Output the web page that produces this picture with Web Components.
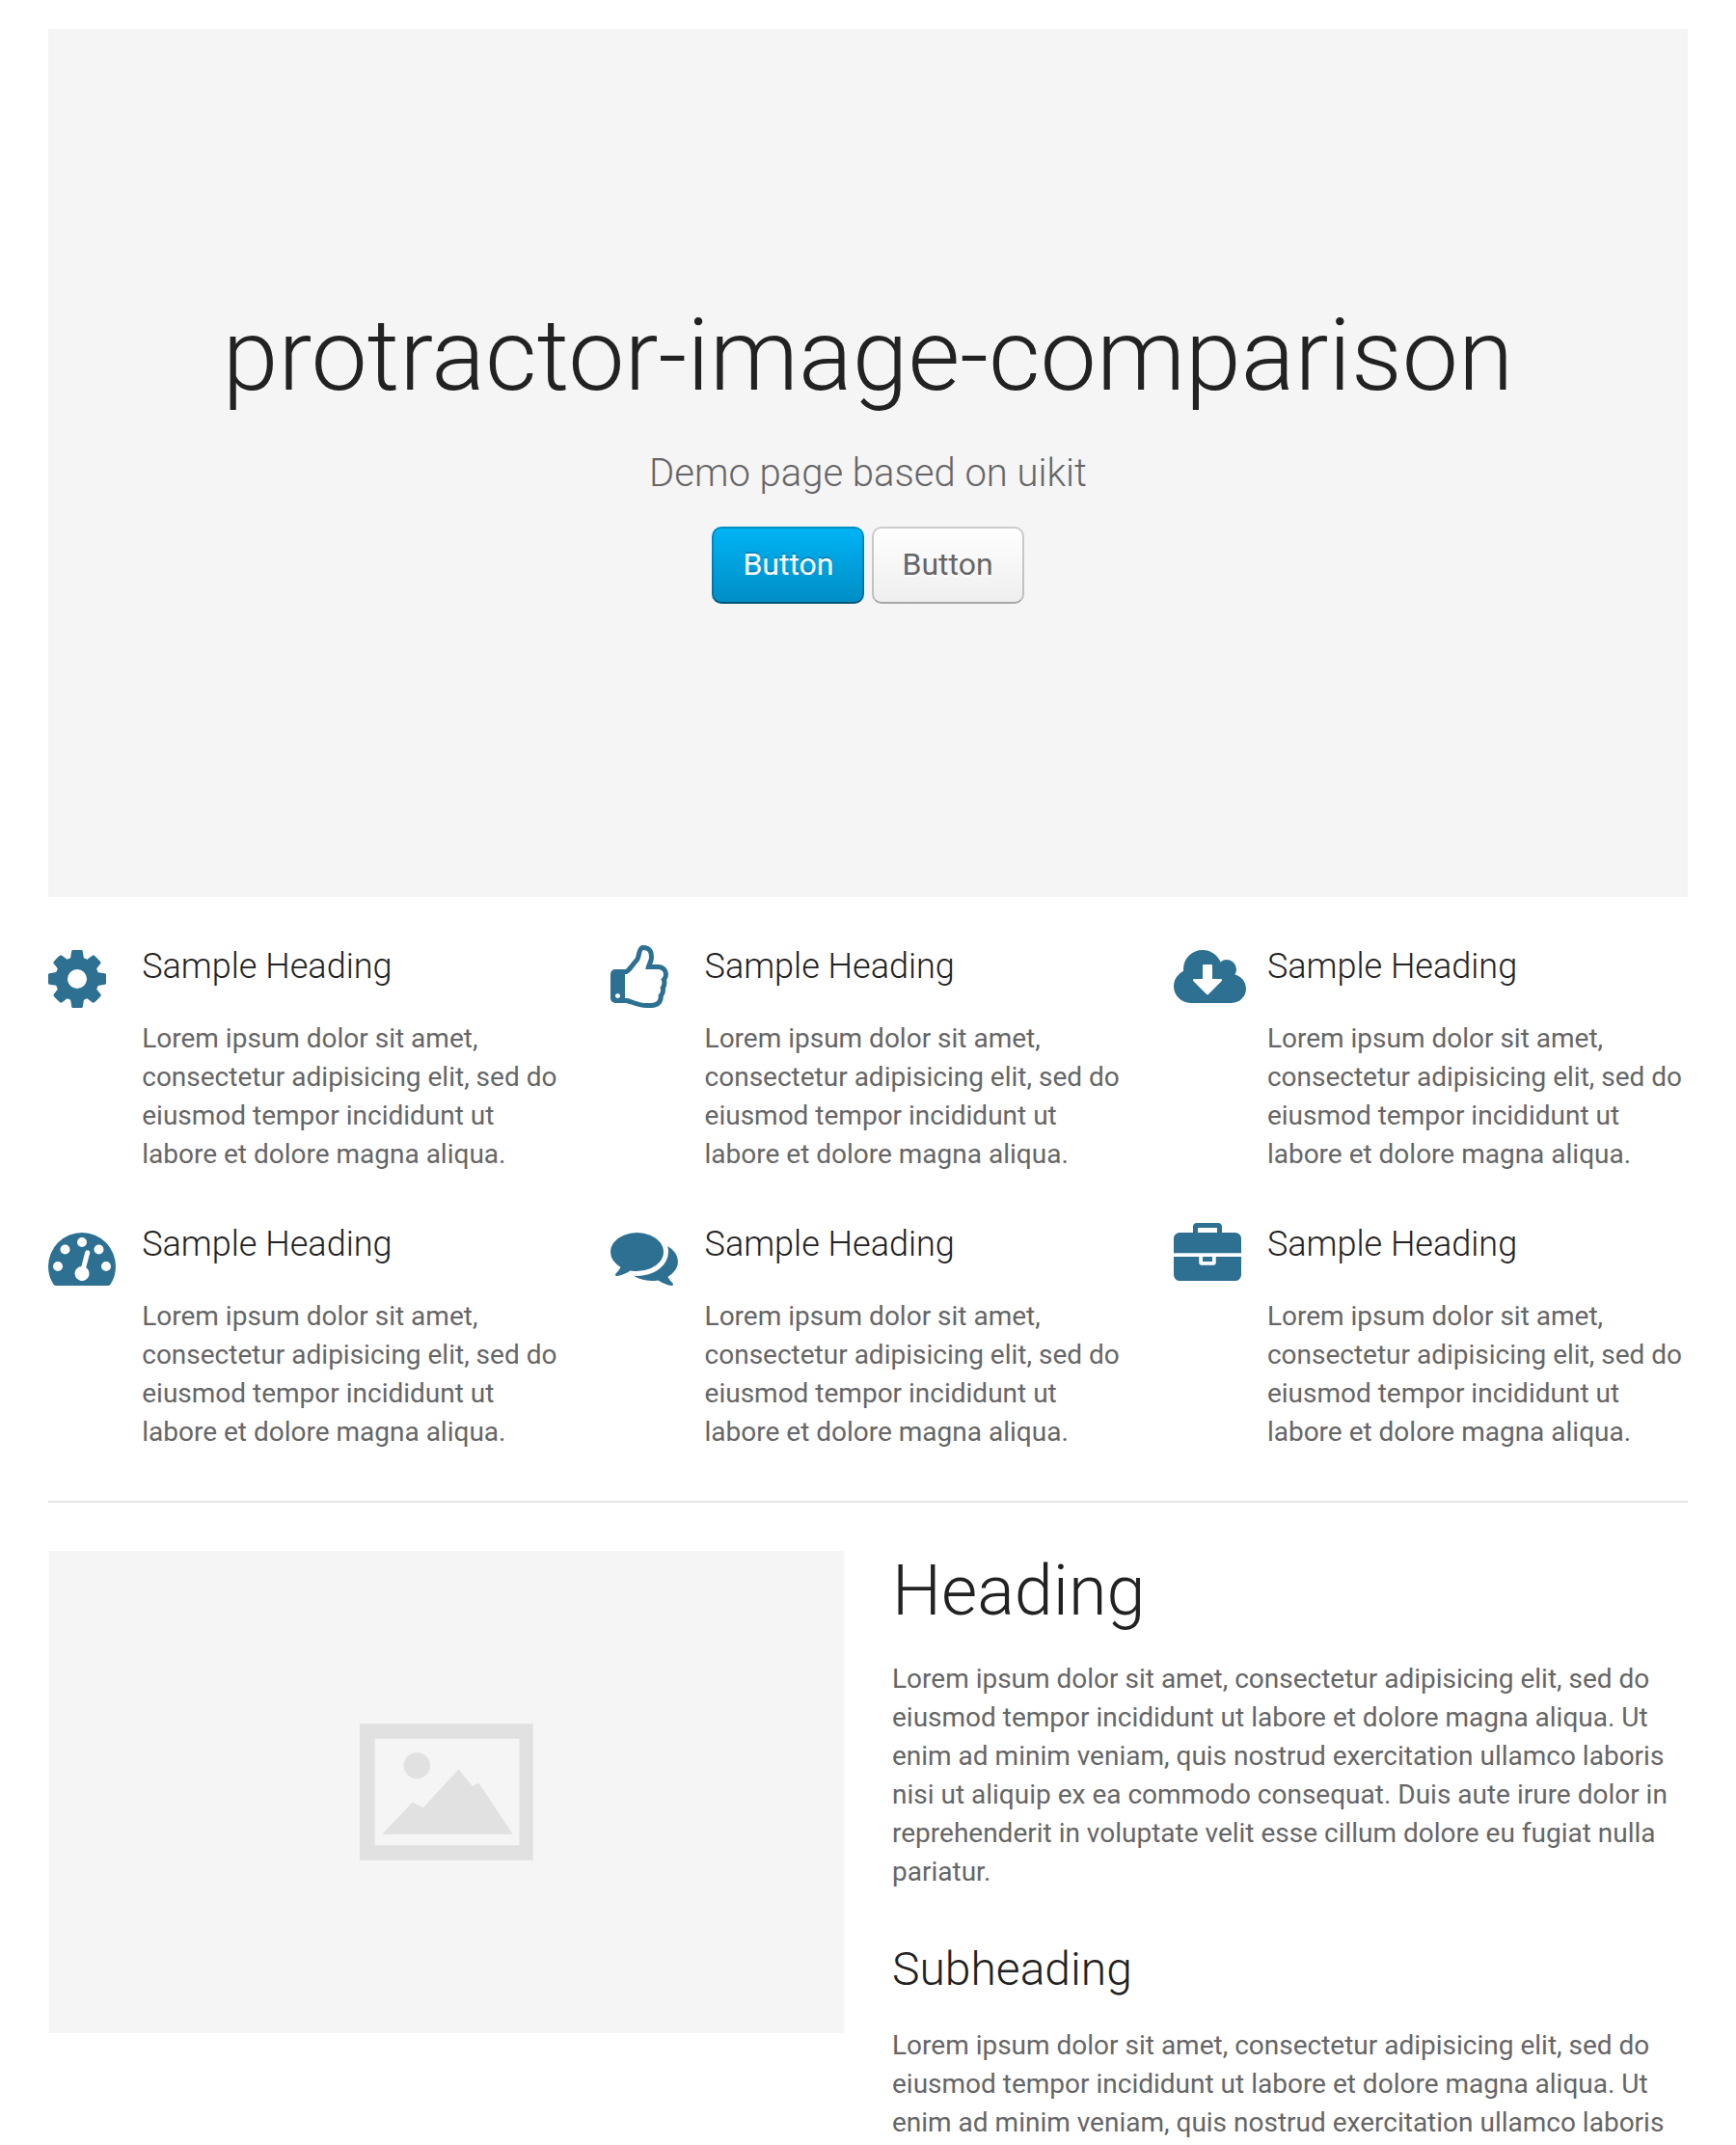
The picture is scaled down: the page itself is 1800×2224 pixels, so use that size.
<!DOCTYPE html>
<html lang="en">
<head>
<meta charset="utf-8">
<title>protractor-image-comparison</title>
<style>
body { margin: 0; background: #fff; color: #666; font: 400 28px/40px Roboto, "Liberation Sans", sans-serif; }
</style>
</head>
<body>
<demo-page></demo-page>
<script>
const define = (name, html) => customElements.define(name, class extends HTMLElement {
  constructor() {
    super();
    this.attachShadow({ mode: 'open' }).innerHTML = html;
  }
});

const ICONS = {
  cog: ['128 0 1536 1792', 'M1152 896q0-106-75-181t-181-75-181 75-75 181 75 181 181 75 181-75 75-181zm512-109v222q0 12-8 23t-20 13l-185 28q-19 54-39 91 35 50 107 138 10 12 10 25t-9 23q-27 37-99 108t-94 71q-12 0-26-9l-138-108q-44 23-91 38-16 136-29 186-7 28-36 28h-222q-14 0-24.5-8.5t-11.5-21.5l-28-184q-49-16-90-37l-141 107q-10 9-25 9-14 0-25-11-126-114-165-168-7-10-7-23 0-12 8-23 15-21 51-66.5t54-70.5q-27-50-41-99l-183-27q-13-2-21-12.5t-8-23.5v-222q0-12 8-23t19-13l186-28q14-46 39-92-40-57-107-138-10-12-10-24 0-10 9-23 26-36 98.5-107.5t94.5-71.5q13 0 26 10l138 107q44-23 91-38 16-136 29-186 7-28 36-28h222q14 0 24.5 8.5t11.5 21.5l28 184q49 16 90 37l142-107q9-9 24-9 13 0 25 10 129 119 165 170 7 8 7 22 0 12-8 23-15 21-51 66.5t-54 70.5q26 50 41 98l183 28q13 2 21 12.5t8 23.5z'],
  thumb: ['128 0 1536 1792', 'M384 1344q0-26-19-45t-45-19-45 19-19 45 19 45 45 19 45-19 19-45zm1152-576q0-51-39-89.5t-89-38.5h-352q0-58 48-159.5t48-160.5q0-98-32-145t-128-47q-26 26-38 85t-30.5 125.5-59.5 109.5q-22 23-77 91-4 5-23 30t-31.5 41-34.5 42.5-40 44-38.5 35.5-40 27-35.5 9h-32v640h32q13 0 31.5 3t33 6.5 38 11 35 11.5 35.5 12.5 29 10.5q211 73 342 73h121q192 0 192-167 0-26-5-56 30-16 47.5-52.5t17.5-73.5-18-69q53-50 53-119 0-25-10-55.5t-25-47.5q32-1 53.5-47t21.5-81zm128-1q0 89-49 163 9 33 9 69 0 77-38 144 3 21 3 43 0 101-60 178 1 139-85 219.5t-227 80.5h-129q-96 0-189.5-22.5t-216.5-65.5q-116-40-138-40h-288q-53 0-90.5-37.5t-37.5-90.5v-640q0-53 37.5-90.5t90.5-37.5h274q36-24 137-155 58-75 107-128 24-25 35.5-85.5t30.5-126.5 62-108q39-37 90-37 84 0 151 32.5t102 101.5 35 186q0 93-48 192h176q104 0 180 76t76 179z'],
  cloud: ['0 0 1920 1792', 'M1280 928q0-14-9-23t-23-9h-224v-352q0-13-9.5-22.5t-22.5-9.5h-192q-13 0-22.5 9.5t-9.5 22.5v352h-224q-13 0-22.5 9.5t-9.5 22.5q0 14 9 23l352 352q9 9 23 9t23-9l351-351q10-12 10-24zm640 224q0 159-112.5 271.5t-271.5 112.5h-1088q-185 0-316.5-131.5t-131.5-316.5q0-130 70-240t188-165q-2-30-2-43 0-212 150-362t362-150q156 0 285.5 87t188.5 231q71-62 166-62 106 0 181 75t75 181q0 76-41 138 130 31 213.5 135.5t83.5 238.5z'],
  gauge: ['0 0 1792 1792', 'M384 1152q0-53-37.5-90.5t-90.5-37.5-90.5 37.5-37.5 90.5 37.5 90.5 90.5 37.5 90.5-37.5 37.5-90.5zm192-448q0-53-37.5-90.5t-90.5-37.5-90.5 37.5-37.5 90.5 37.5 90.5 90.5 37.5 90.5-37.5 37.5-90.5zm428 481l101-382q6-26-7.5-48.5t-38.5-29.5-48 6.5-30 39.5l-101 382q-60 5-107 43.5t-63 98.5q-20 77 20 146t117 89 146-20 89-117q16-60-6-117t-72-91zm660-33q0-53-37.5-90.5t-90.5-37.5-90.5 37.5-37.5 90.5 37.5 90.5 90.5 37.5 90.5-37.5 37.5-90.5zm-640-640q0-53-37.5-90.5t-90.5-37.5-90.5 37.5-37.5 90.5 37.5 90.5 90.5 37.5 90.5-37.5 37.5-90.5zm448 192q0-53-37.5-90.5t-90.5-37.5-90.5 37.5-37.5 90.5 37.5 90.5 90.5 37.5 90.5-37.5 37.5-90.5zm320 448q0 261-141 483-19 29-54 29h-1402q-35 0-54-29-141-221-141-483 0-182 71-348t191-286 286-191 348-71 348 71 286 191 191 286 71 348z'],
  comments: ['0 0 1792 1792', 'M1408 768q0 139-94 257t-256.5 186.5-353.5 68.5q-86 0-176-16-124 88-278 128-36 9-86 16h-3q-11 0-20.5-8t-11.5-21q-1-3-1-6.5t.5-6.5 2-6l2.5-5 3.5-5.5 4-5 4.5-5 4-4.5q5-6 23-25t26-29.5 22.5-29 25-38.5 20.5-44q-124-72-195-177t-71-224q0-139 94-257t256.5-186.5 353.5-68.5 353.5 68.5 256.5 186.5 94 257zm384 256q0 120-71 224.5t-195 176.5q10 24 20.5 44t25 38.5 22.5 29 26 29.5 23 25q1 1 4 4.5t4.5 5 4 5 3.5 5.5l2.5 5 2 6 .5 6.5-1 6.5q-3 14-13 22t-22 7q-50-7-86-16-154-40-278-128-90 16-176 16-271 0-472-132 58 4 88 4 161 0 309-45t264-129q125-92 192-212t67-254q0-77-23-152 129 71 204 178t75 230z'],
  briefcase: ['0 0 1792 1792', 'M640 256h512v-128h-512v128zm1152 640v480q0 66-47 113t-113 47h-1472q-66 0-113-47t-47-113v-480h672v160q0 26 19 45t45 19h320q26 0 45-19t19-45v-160h672zm-768 0v128h-256v-128h256zm768-480v384h-1792v-384q0-66 47-113t113-47h352v-160q0-40 28-68t68-28h576q40 0 68 28t28 68v160h352q66 0 113 47t47 113z']
};

customElements.define('demo-icon', class extends HTMLElement {
  constructor() { super(); this.attachShadow({ mode: 'open' }); }
  connectedCallback() {
    const [box, d] = ICONS[this.getAttribute('name')];
    this.shadowRoot.innerHTML = `<style>:host{display:block;color:#2d7091;height:70px}svg{display:block;height:70px;fill:currentColor}</style>
<svg viewBox="${box}"><path d="${d}"/></svg>`;
  }
});

define('demo-button', `<style>
:host { display: block; }
button { display: block; box-sizing: border-box; width: 158px; height: 80px; margin: 0; padding: 0 0 2px 29.5px; font: inherit; font-size: 32px; line-height: 74px;
  text-align: left; white-space: nowrap; color: #666; text-shadow: 0 2px 0 #fff; border: 2px solid rgba(0,0,0,.2); border-bottom-color: rgba(0,0,0,.3); border-radius: 10px;
  background: linear-gradient(to bottom, #fff, #eee) border-box; }
:host([primary]) button { padding-left: 30.4px; color: #fff; text-shadow: 0 -2px 0 rgba(0,0,0,.2); border-bottom-color: rgba(0,0,0,.4);
  background-image: linear-gradient(to bottom, #00b4f5, #008dc5); }
</style><button type="button"><slot></slot></button>`);

define('demo-hero', `<style>
:host { display: flex; flex-direction: column; align-items: center; box-sizing: border-box; height: 900px; padding-top: 275px; background: #f5f5f5; text-align: center; }
h1 { margin: 0; font-size: 104px; line-height: 128px; font-weight: 300; color: #222; }
p { margin: 28px 0 25px; font-size: 40px; line-height: 60px; font-weight: 300; }
.actions { display: flex; gap: 8px; }
</style><h1><slot name="title"></slot></h1><p><slot name="lead"></slot></p><div class="actions"><slot></slot></div>`);

define('demo-feature', `<style>
:host { display: flex; }
.icon { flex: 0 0 97.22px; }
.body { flex: 1; min-width: 0; }
h3 { margin: 0 0 33px; font-size: 36px; line-height: 44px; font-weight: 300; color: #222; }
p { margin: 0; }
</style><div class="icon"><slot name="icon"></slot></div><div class="body"><h3><slot name="title"></slot></h3><p><slot></slot></p></div>`);

define('demo-placeholder', `<style>
:host { display: block; height: 500px; }
svg { display: block; width: 825px; height: 500px; overflow: visible; }
</style><svg viewBox="50 1608 825 500" fill="#e1e1e1">
<rect x="50.5" y="1608" width="825" height="500" fill="#f5f5f5"/>
<path fill-rule="evenodd" d="M373 1787.3H552.8V1928.8H373ZM388.6 1802.7V1913.2H538.4V1802.7Z"/>
<circle cx="432.3" cy="1830.6" r="13.7"/>
<path d="M396.4 1901.8L427.5 1868.7L439 1874L475.4 1834.6L490 1852L496.2 1848.3L531.6 1901.8Z"/></svg>`);

define('demo-article', `<style>
:host { display: block; }
h1 { margin: 0 0 29px; font-size: 72px; line-height: 84px; font-weight: 300; color: #222; }
h2 { margin: 51px 0 29px; font-size: 48px; line-height: 60px; font-weight: 300; color: #222; }
p { margin: 0; }
</style>
<h1>Heading</h1>
<p>Lorem ipsum dolor sit amet, consectetur adipisicing elit, sed do eiusmod tempor incididunt ut labore et dolore magna aliqua. Ut enim ad minim veniam, quis nostrud exercitation ullamco laboris nisi ut aliquip ex ea commodo consequat. Duis aute irure dolor in reprehenderit in voluptate velit esse cillum dolore eu fugiat nulla pariatur.</p>
<h2>Subheading</h2>
<p>Lorem ipsum dolor sit amet, consectetur adipisicing elit, sed do eiusmod tempor incididunt ut labore et dolore magna aliqua. Ut enim ad minim veniam, quis nostrud exercitation ullamco laboris</p>`);

const feature = icon => `<demo-feature><demo-icon slot="icon" name="${icon}"></demo-icon><span slot="title">Sample Heading</span>Lorem ipsum dolor sit amet, consectetur adipisicing elit, sed do eiusmod tempor incididunt ut labore et dolore magna aliqua.</demo-feature>`;

define('demo-page', `<style>
:host { display: block; box-sizing: border-box; height: 2224px; overflow: hidden; padding: 30px 50px 0; }
.features { display: grid; grid-template-columns: repeat(3, 1fr); grid-auto-rows: 238px; gap: 50px; margin-top: 50px; }
hr { height: 2px; margin: 50px 0; border: 0; background: #e5e5e5; }
.split { display: grid; grid-template-columns: 1fr 1fr; gap: 50px; align-items: start; }
</style>
<demo-hero><span slot="title">protractor-image-comparison</span><span slot="lead">Demo page based on uikit</span>
<demo-button primary>Button</demo-button><demo-button>Button</demo-button></demo-hero>
<div class="features">${Object.keys(ICONS).map(feature).join('')}</div>
<hr>
<div class="split"><demo-placeholder></demo-placeholder><demo-article></demo-article></div>`);
</script>
</body>
</html>
